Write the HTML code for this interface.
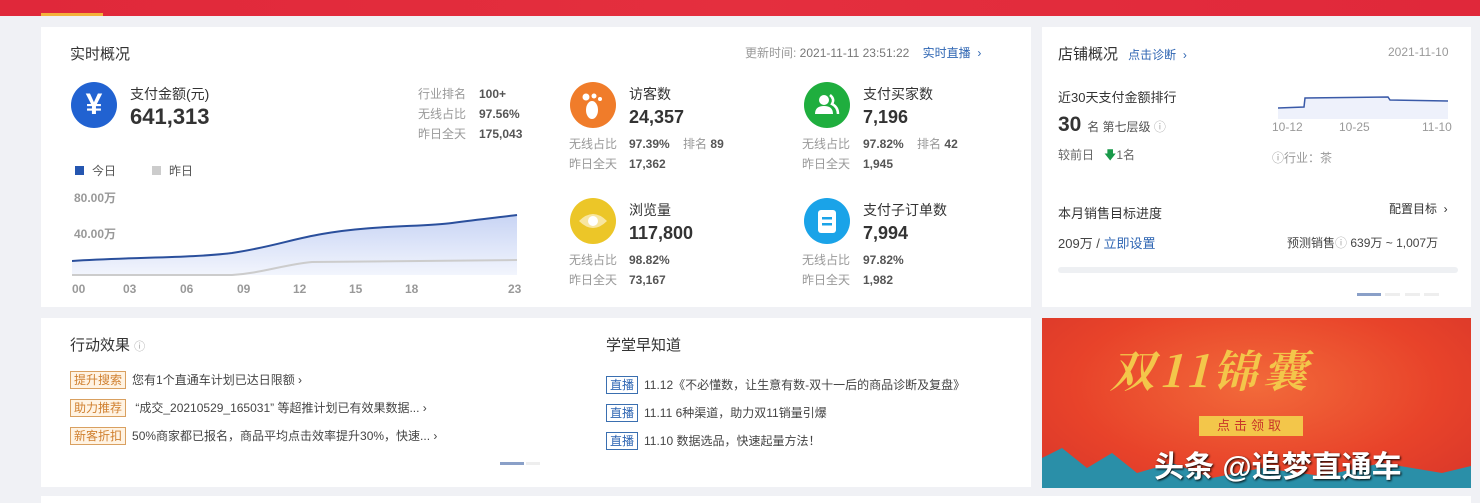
<!DOCTYPE html>
<html><head><meta charset="utf-8"><style>
*{margin:0;padding:0;box-sizing:border-box}
body{width:1480px;height:503px;overflow:hidden;background:#f0f1f5;font-family:"Liberation Sans","Noto Sans CJK SC",sans-serif;color:#333;position:relative}
.abs{position:absolute}
.card{position:absolute;background:#fff}
.t{position:absolute;white-space:nowrap}
.g{color:#999;font-size:12px}
.v{color:#555;font-size:12px;font-weight:bold}
.ic{position:absolute;width:46px;height:46px;border-radius:50%}
.tag{display:inline-block;border:1px solid #d9a060;background:#fff3e3;color:#d08030;font-size:12px;padding:0 3px;line-height:16px;margin-right:6px}
.lv{display:inline-block;border:1px solid #3a6fb0;color:#2f66b3;font-size:12px;padding:0 3px;line-height:16px;margin-right:6px}
</style></head><body>
<div class="abs" style="left:0;top:0;width:1480px;height:16px;background:linear-gradient(90deg,#e0283a,#e42f3e 50%,#e0283a)"></div>
<div class="abs" style="left:41px;top:13px;width:62px;height:3px;background:#f3b23a"></div>

<div class="card" style="left:41px;top:27px;width:990px;height:280px">
 <div class="t" style="left:29px;top:16px;font-size:15px">实时概况</div>
 <div class="t g" style="left:704px;top:17px">更新时间: <span style="color:#777">2021-11-11 23:51:22</span>&nbsp;&nbsp;&nbsp;&nbsp;<span style="color:#2f66b3">实时直播 &nbsp;›</span></div>
 <div class="ic" style="left:30px;top:55px;background:#2162d1;color:#fff;font-size:30px;font-weight:bold;text-align:center;line-height:46px">¥</div>
 <div class="t" style="left:89px;top:57px;font-size:14px">支付金额(元)</div>
 <div class="t" style="left:89px;top:77px;font-size:22px;font-weight:bold">641,313</div>
 <div class="t g" style="left:377px;top:57px;line-height:20px">行业排名<br>无线占比<br>昨日全天</div>
 <div class="t v" style="left:438px;top:57px;line-height:20px">100+<br>97.56%<br>175,043</div>
 <div class="t" style="left:34px;top:135px;font-size:12px;color:#555"><span style="display:inline-block;width:9px;height:9px;background:#2556b0;margin-right:8px"></span>今日<span style="display:inline-block;width:9px;height:9px;background:#ccc;margin:0 8px 0 36px"></span>昨日</div>
 <div class="t g" style="left:33px;top:162px;font-weight:bold">80.00万</div>
 <div class="t g" style="left:33px;top:198px;font-weight:bold">40.00万</div>
 <div class="t g" style="left:33px;top:235px;font-weight:bold">0</div>
 <svg class="abs" style="left:31px;top:180px" width="446" height="70">
  <defs><linearGradient id="a" x1="0" y1="0" x2="0" y2="1"><stop offset="0" stop-color="#c8d4f4"/><stop offset="1" stop-color="#f2f5fd"/></linearGradient></defs>
  <path d="M0 54 C60 50 120 51 160 46 C200 40 220 32 250 27 C300 18 350 20 380 16 C410 12 430 10 445 8 L445 68 L0 68Z" fill="url(#a)"/>
  <path d="M0 54 C60 50 120 51 160 46 C200 40 220 32 250 27 C300 18 350 20 380 16 C410 12 430 10 445 8" fill="none" stroke="#2a4f9c" stroke-width="2"/>
  <path d="M0 68 L160 68 C190 66 210 58 240 55 L445 53" fill="none" stroke="#ccc" stroke-width="2"/>
 </svg>
 <div class="t g" style="left:31px;top:255px;font-weight:bold;word-spacing:0">00</div>
 <div class="t g" style="left:82px;top:255px;font-weight:bold">03</div>
 <div class="t g" style="left:139px;top:255px;font-weight:bold">06</div>
 <div class="t g" style="left:196px;top:255px;font-weight:bold">09</div>
 <div class="t g" style="left:252px;top:255px;font-weight:bold">12</div>
 <div class="t g" style="left:308px;top:255px;font-weight:bold">15</div>
 <div class="t g" style="left:364px;top:255px;font-weight:bold">18</div>
 <div class="t g" style="left:467px;top:255px;font-weight:bold">23</div>

 <div class="ic" style="left:529px;top:55px;background:#f07c2a"><svg width="46" height="46"><ellipse cx="22" cy="28" rx="6" ry="9" fill="#fff"/><circle cx="16" cy="15" r="3.5" fill="#fff"/><circle cx="24" cy="14" r="2.5" fill="#fff"/><circle cx="30" cy="17" r="2" fill="#fff"/></svg></div>
 <div class="t" style="left:588px;top:57px;font-size:14px">访客数</div>
 <div class="t" style="left:588px;top:80px;font-size:18px;font-weight:bold">24,357</div>
 <div class="t g" style="left:528px;top:107px;line-height:20px">无线占比<br>昨日全天</div>
 <div class="t v" style="left:588px;top:107px;line-height:20px">97.39% &nbsp;&nbsp;&nbsp;<span style="color:#999;font-weight:normal">排名</span> 89<br>17,362</div>

 <div class="ic" style="left:763px;top:55px;background:#1fae3e"><svg width="46" height="46"><circle cx="20" cy="18" r="5" fill="#fff"/><path d="M11 32 Q11 24 20 24 Q29 24 29 32Z" fill="#fff"/><path d="M26 13 Q31 17 28 22 Q34 25 34 32" stroke="#fff" stroke-width="2.5" fill="none"/></svg></div>
 <div class="t" style="left:822px;top:57px;font-size:14px">支付买家数</div>
 <div class="t" style="left:822px;top:80px;font-size:18px;font-weight:bold">7,196</div>
 <div class="t g" style="left:761px;top:107px;line-height:20px">无线占比<br>昨日全天</div>
 <div class="t v" style="left:822px;top:107px;line-height:20px">97.82% &nbsp;&nbsp;&nbsp;<span style="color:#999;font-weight:normal">排名</span> 42<br>1,945</div>

 <div class="ic" style="left:529px;top:171px;background:#ecc628"><svg width="46" height="46"><path d="M9 23 Q23 9 37 23 Q23 37 9 23Z" fill="#f8e6a0"/><circle cx="23" cy="23" r="5" fill="#fff"/></svg></div>
 <div class="t" style="left:588px;top:173px;font-size:14px">浏览量</div>
 <div class="t" style="left:588px;top:196px;font-size:18px;font-weight:bold">117,800</div>
 <div class="t g" style="left:528px;top:223px;line-height:20px">无线占比<br>昨日全天</div>
 <div class="t v" style="left:588px;top:223px;line-height:20px">98.82%<br>73,167</div>

 <div class="ic" style="left:763px;top:171px;background:#1aa3e8"><svg width="46" height="46"><rect x="14" y="12" width="18" height="23" rx="3" fill="#fff"/><rect x="18" y="19" width="10" height="2.5" fill="#1aa3e8"/><rect x="18" y="25" width="10" height="2.5" fill="#1aa3e8"/></svg></div>
 <div class="t" style="left:822px;top:173px;font-size:14px">支付子订单数</div>
 <div class="t" style="left:822px;top:196px;font-size:18px;font-weight:bold">7,994</div>
 <div class="t g" style="left:761px;top:223px;line-height:20px">无线占比<br>昨日全天</div>
 <div class="t v" style="left:822px;top:223px;line-height:20px">97.82%<br>1,982</div>
</div>

<div class="card" style="left:1042px;top:27px;width:429px;height:280px">
 <div class="t" style="left:16px;top:16px;font-size:15px">店铺概况 <span style="font-size:12px;color:#2f66b3;margin-left:6px">点击诊断 &nbsp;›</span></div>
 <div class="t g" style="left:346px;top:18px;font-size:12px">2021-11-10</div>
 <div class="t" style="left:16px;top:60px;font-size:13px">近30天支付金额排行</div>
 <div class="t" style="left:16px;top:86px;font-size:21px;font-weight:bold">30 <span style="font-size:12px;font-weight:normal;color:#555">名 第七层级 <span style="color:#aaa">ⓘ</span></span></div>
 <div class="t" style="left:16px;top:119px;font-size:12px;color:#666">较前日 &nbsp;&nbsp;<span style="color:#1a9a4a">🡇</span>1名</div>
 <svg class="abs" style="left:236px;top:66px" width="172" height="26"><path d="M0 15 L26 14 L27 5 L110 4 L112 7 L170 8 L170 26 L0 26Z" fill="#eef1fb"/><path d="M0 15 L26 14 L27 5 L110 4 L112 7 L170 8" fill="none" stroke="#3a5aa8" stroke-width="1.5"/></svg>
 <div class="t g" style="left:230px;top:93px">10-12</div>
 <div class="t g" style="left:297px;top:93px">10-25</div>
 <div class="t g" style="left:380px;top:93px">11-10</div>
 <div class="t g" style="left:230px;top:122px">ⓘ行业：茶</div>
 <div class="t" style="left:16px;top:176px;font-size:13px">本月销售目标进度</div>
 <div class="t" style="left:347px;top:173px;font-size:12px">配置目标 &nbsp;›</div>
 <div class="t" style="left:16px;top:206px;font-size:13px;color:#444">209万 / <span style="color:#2f66b3">立即设置</span></div>
 <div class="t" style="left:245px;top:207px;font-size:12px;color:#444">预测销售<span style="color:#aaa">ⓘ</span> 639万 ~ 1,007万</div>
 <div class="abs" style="left:16px;top:240px;width:400px;height:6px;background:#eef0f3;border-radius:3px"></div>
 <div class="abs" style="left:315px;top:266px;width:24px;height:3px;background:#8aa0c8"></div>
 <div class="abs" style="left:343px;top:266px;width:15px;height:3px;background:#eee"></div>
 <div class="abs" style="left:363px;top:266px;width:15px;height:3px;background:#eee"></div>
 <div class="abs" style="left:382px;top:266px;width:15px;height:3px;background:#eee"></div>
</div>

<div class="card" style="left:41px;top:318px;width:990px;height:169px">
 <div class="t" style="left:29px;top:16px;font-size:15px">行动效果 <span style="font-size:11px;color:#aaa">ⓘ</span></div>
 <div class="t" style="left:29px;top:53px;font-size:12px;color:#444"><span class="tag">提升搜索</span>您有1个直通车计划已达日限额 ›</div>
 <div class="t" style="left:29px;top:81px;font-size:12px;color:#444"><span class="tag">助力推荐</span> “成交_20210529_165031” 等超推计划已有效果数据... ›</div>
 <div class="t" style="left:29px;top:109px;font-size:12px;color:#444"><span class="tag">新客折扣</span>50%商家都已报名，商品平均点击效率提升30%，快速... ›</div>
 <div class="abs" style="left:459px;top:144px;width:24px;height:3px;background:#8aa0c8"></div>
 <div class="abs" style="left:485px;top:144px;width:14px;height:3px;background:#eee"></div>
 <div class="t" style="left:565px;top:16px;font-size:15px">学堂早知道</div>
 <div class="t" style="left:565px;top:58px;font-size:12px;color:#444"><span class="lv">直播</span>11.12《不必懂数，让生意有数-双十一后的商品诊断及复盘》</div>
 <div class="t" style="left:565px;top:86px;font-size:12px;color:#444"><span class="lv">直播</span>11.11 6种渠道，助力双11销量引爆</div>
 <div class="t" style="left:565px;top:114px;font-size:12px;color:#444"><span class="lv">直播</span>11.10 数据选品，快速起量方法！</div>
</div>

<div class="abs" style="left:1042px;top:318px;width:429px;height:170px;overflow:hidden;background:radial-gradient(ellipse at 50% 40%,#f26a3a,#e8432a 60%,#d8362a)">
 <svg class="abs" style="left:0;top:120px" width="429" height="50"><path d="M0 50 L0 20 L20 10 L45 30 L70 15 L95 35 L130 25 L170 40 L220 30 L280 38 L340 25 L400 35 L429 28 L429 50Z" fill="#2a8fa8"/></svg>
 <div class="t" style="left:68px;top:18px;font-size:44px;font-weight:bold;color:#f3c64a;font-family:'Noto Serif CJK SC',serif;font-style:italic;letter-spacing:6px">双11锦囊</div>
 <div class="t" style="left:157px;top:98px;width:104px;height:20px;background:#f3c64a;color:#c9352a;font-size:13px;text-align:center;line-height:20px;letter-spacing:4px">点击领取</div>
 <div class="t" style="left:112px;top:124px;font-size:30px;font-weight:bold;color:#fff;text-shadow:1px 1px 2px #000">头条 @追梦直通车</div>
</div>
<div class="abs" style="left:41px;top:496px;width:1430px;height:7px;background:#fff"></div>
</body></html>
